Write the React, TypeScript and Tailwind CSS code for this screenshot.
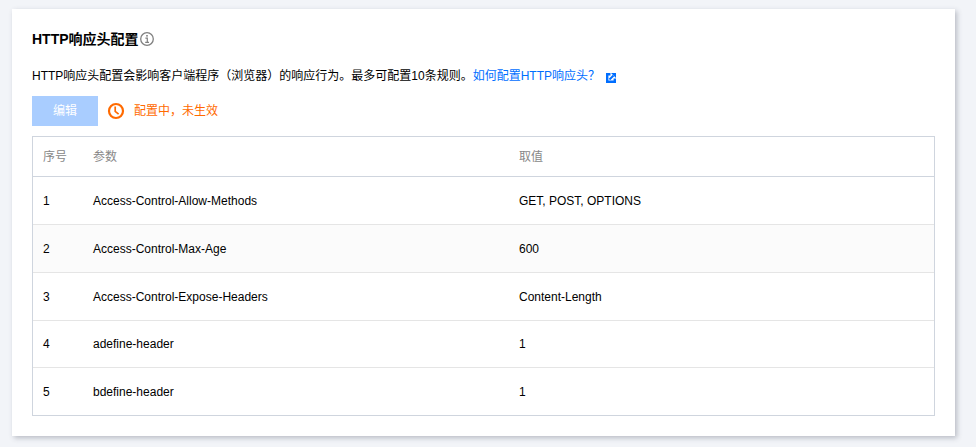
const rows = [
  ["1", "Access-Control-Allow-Methods", "GET, POST, OPTIONS", "h-[48px]", ""],
  ["2", "Access-Control-Max-Age", "600", "h-[48px]", "bg-[#fbfbfb]"],
  ["3", "Access-Control-Expose-Headers", "Content-Length", "h-[48px]", ""],
  ["4", "adefine-header", "1", "h-[47px]", ""],
  ["5", "bdefine-header", "1", "h-[47px]", ""],
];

export default function App() {
  return (
    <div className="w-[976px] h-[447px] bg-[#f2f4f8] pt-[9px] pl-[12px] overflow-hidden font-['Liberation_Sans','Noto_Sans_CJK_SC',sans-serif] text-xs text-[#000000]">
      <div className="w-[943px] h-[427px] bg-white shadow-[2px_2px_5px_rgba(54,58,80,0.3)] px-[20px] pt-[20px]">
        <div className="flex items-center h-[20px]">
          <h2 className="text-sm font-bold leading-[20px]">HTTP响应头配置</h2>
          <svg width="16" height="16" viewBox="0 0 16 16" fill="none" className="text-[#808080]">
            <circle cx="8" cy="8" r="6.3" stroke="currentColor" strokeWidth="1.3" />
            <rect x="7.2" y="4" width="1.6" height="1.6" fill="currentColor" />
            <path d="M6.4 7.2h1.9v4M6.2 11.4h3.8" stroke="currentColor" strokeWidth="1.2" />
          </svg>
        </div>
        <p className="mt-[17px] h-[20px] leading-[20px] flex items-center">
          <span>HTTP响应头配置会影响客户端程序（浏览器）的响应行为。最多可配置10条规则。</span>
          <span className="text-[#006eff]">如何配置HTTP响应头？</span>
          <svg width="10" height="10" viewBox="0 0 10 10" fill="none" className="ml-[6px] mt-[3px]">
            <path d="M4.5 1.2H1.2v7.6h7.6V5.5" stroke="#006eff" strokeWidth="2.4" />
            <path d="M3.5 6.5L7.5 2.5" stroke="#006eff" strokeWidth="2" />
            <path d="M5 0H10V5z" fill="#006eff" />
          </svg>
        </p>
        <div className="mt-[10px] flex items-center h-[30px]">
          <button className="w-[66px] h-[30px] bg-[#a9cdff] text-white text-center">编辑</button>
          <svg width="18" height="18" viewBox="0 0 18 18" fill="none" className="ml-[9px]">
            <circle cx="9" cy="9" r="7" stroke="#ff6a00" strokeWidth="2.2" />
            <path d="M8.2 4.6v4.8l3.4 2.8" stroke="#ff6a00" strokeWidth="1.7" />
          </svg>
          <span className="ml-[9px] text-[#ff6a00]">配置中，未生效</span>
        </div>
        <div className="mt-[10px] w-[903px] h-[280px] border border-[#cfd5de]">
          <div className="flex items-center h-[40px] border-b border-[#cfd5de] text-[#888888]">
            <div className="w-[50px] pl-[10px]">序号</div>
            <div className="w-[426px] pl-[10px]">参数</div>
            <div className="flex-1 pl-[10px]">取值</div>
          </div>
          {rows.map(([n, k, v, h, bg], i) => (
            <div
              key={n}
              className={`flex items-center ${h} ${bg} ${i < 4 ? "border-b border-[#e5e5e5]" : ""}`}
            >
              <div className="w-[50px] pl-[10px]">{n}</div>
              <div className="w-[426px] pl-[10px]">{k}</div>
              <div className="flex-1 pl-[10px]">{v}</div>
            </div>
          ))}
        </div>
      </div>
    </div>
  );
}
